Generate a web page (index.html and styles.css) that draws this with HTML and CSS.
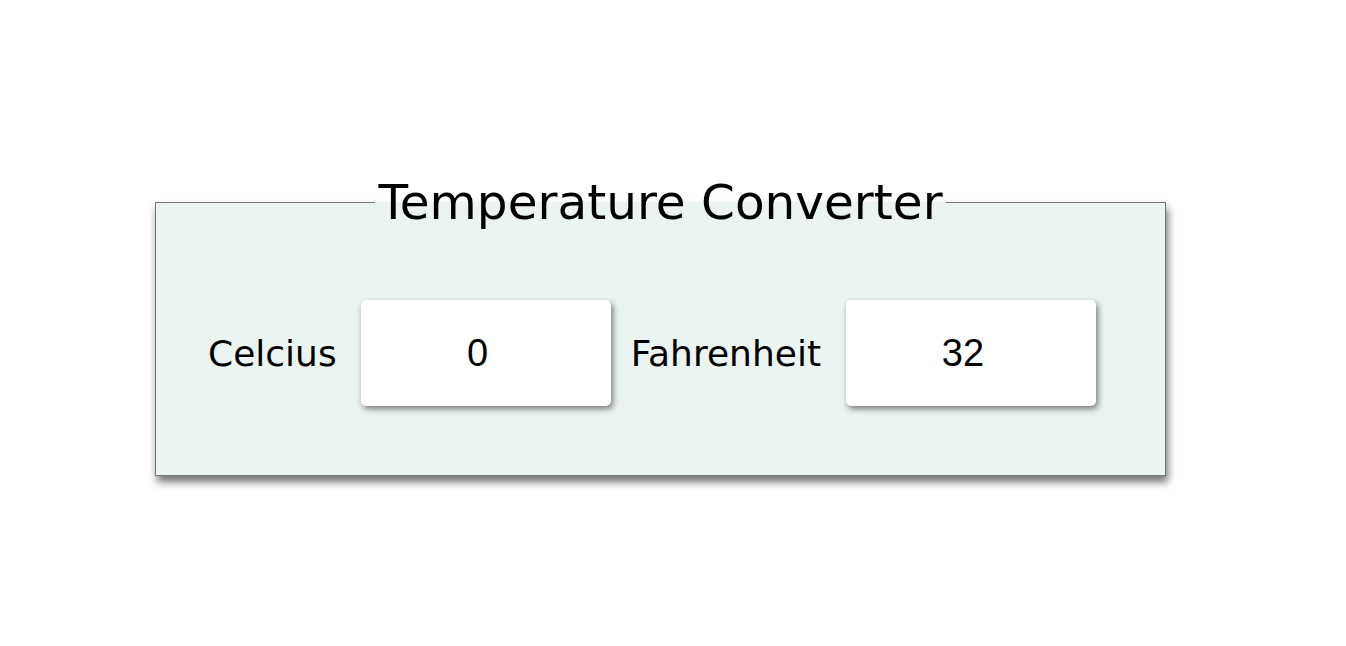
FILE: index.html
```html
<!DOCTYPE html>
<html>
<head>
<meta charset="utf-8">
<link rel="stylesheet" href="styles.css">
</head>
<body>
<div class="page">
<fieldset class="converter">
  <legend class="title">Temperature Converter</legend>
  <div class="row">
    <label class="label label-c">Celcius</label>
    <input class="field" type="text" value="0">
    <label class="label label-f">Fahrenheit</label>
    <input class="field" type="text" value="32">
  </div>
</fieldset>
</div>
</body>
</html>
```
FILE: styles.css
```css
html, body {
  margin: 0;
  padding: 0;
  background: #ffffff;
}
body {
  font-family: "DejaVu Sans", sans-serif;
  color: #000;
}
.page {
  min-height: 646px;
  padding-top: 174px;
  box-sizing: border-box;
}
.converter {
  box-sizing: border-box;
  width: 1011px;
  margin: 0 0 0 155px;
  padding: 0 0 69px 0;
  border: 1px solid #777777;
  background: #ecf4f1;
  box-shadow: 2px 6px 8px rgba(0,0,0,0.55);
}
.title {
  margin: 0 auto;
  padding: 0 3px;
  font-size: 48.5px;
  line-height: 56px;
}
.row {
  display: flex;
  align-items: center;
  margin-top: 70px;
  padding-left: 52px;
}
.label {
  font-size: 36px;
}
.label-c { margin-right: 24px; }
.label-f { margin: 0 25px 0 20px; }
.field {
  box-sizing: border-box;
  width: 250px;
  height: 106px;
  border: none;
  border-radius: 5px;
  background: #fff;
  box-shadow: 2px 3px 6px rgba(0,0,0,0.5);
  text-align: center;
  font-family: "Liberation Sans", Arial, sans-serif;
  font-size: 38px;
  color: #000;
  padding: 0 16px 0 0;
  outline: none;
}
```
